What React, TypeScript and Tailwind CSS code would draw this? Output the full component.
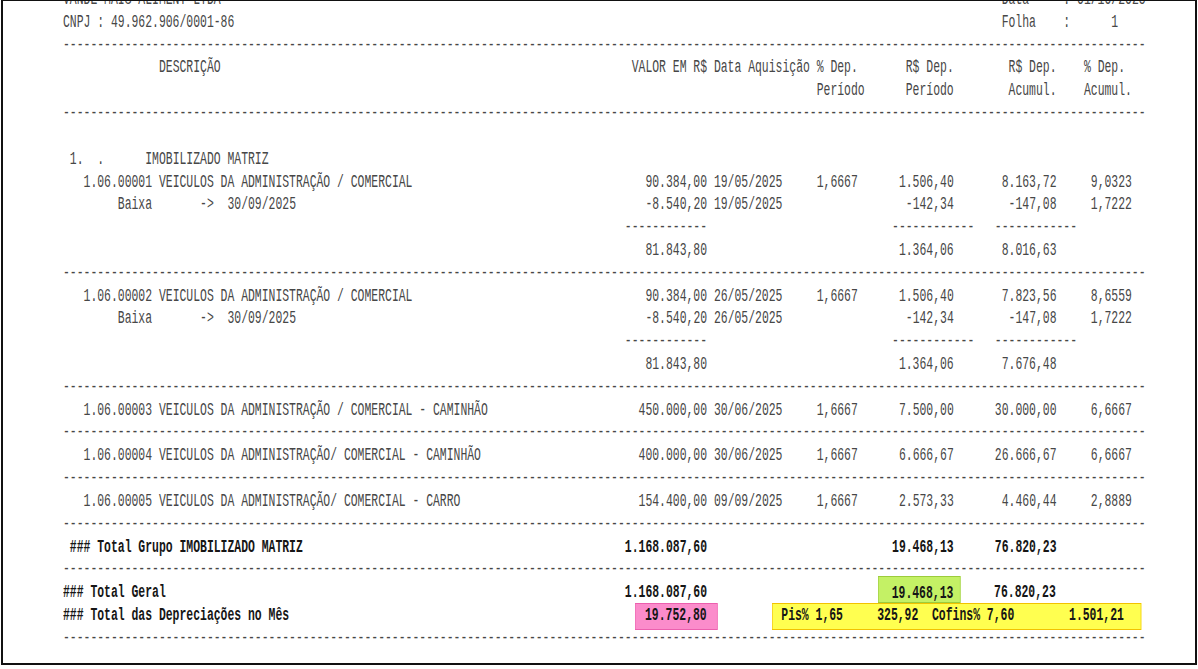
import React from 'react'

type Seg = { c: number; t: string; k?: string };

const B = "font-bold text-[#161616]";
const GREEN = "font-bold text-[#161616] bg-[#c4f165] border-y border-x-[1.6px] border-[#9ccc3c] pt-[5.5px] pb-0 pl-[20px] -ml-[21.6px] pr-[10px] -mr-[11.6px]";
const PINK = "font-bold text-[#161616] bg-[#fb8ccb] border-y border-x-[1.6px] border-[#ec5fae] pt-[0.5px] pb-[4.5px] pl-[14.6px] -ml-[16.2px] pr-[16.4px] -mr-[18px]";
const YELLOW = "font-bold text-[#161616] bg-[#ffff50] border-y border-x-[1.6px] border-[#f2c200] pt-[0.5px] pb-[4.5px] pl-[13.4px] -ml-[15px] pr-[26.8px] -mr-[28.4px]";

// right aligned value ending at column `end`
const r = (end: number, t: string, k?: string): Seg => ({ c: end - t.length + 1, t, k });

const DASH: Seg[] = [{ c: 0, t: "-".repeat(158) }];
const SUB: Seg[] = [
    { c: 82, t: "-".repeat(12) },
    { c: 121, t: "-".repeat(12) },
    { c: 136, t: "-".repeat(12) },
];

const item = (code: string, desc: string, valor: string, data: string, rsPer: string, rsAcu: string, pcAcu: string): Seg[] => [
    { c: 3, t: `${code} ${desc}` },
    r(93, valor),
    { c: 95, t: data },
    r(115, "1,6667"),
    r(129, rsPer),
    r(144, rsAcu),
    r(155, pcAcu),
];

const baixa = (data: string): Seg[] => [
    { c: 8, t: "Baixa" },
    { c: 20, t: "->" },
    { c: 24, t: "30/09/2025" },
    r(93, "-8.540,20"),
    { c: 95, t: data },
    r(129, "-142,34"),
    r(144, "-147,08"),
    r(155, "1,7222"),
];

const lines: Seg[][] = [
    [{ c: 0, t: "VANDE MAIS ALIMENT LTDA" }, { c: 137, t: "Data" }, { c: 146, t: ":" }, { c: 148, t: "01/10/2025" }],
    [{ c: 0, t: "CNPJ : 49.962.906/0001-86" }, { c: 137, t: "Folha" }, { c: 146, t: ":" }, { c: 153, t: "1" }],
    DASH,
    [{ c: 14, t: "DESCRIÇÃO" }, { c: 83, t: "VALOR EM R$ Data Aquisição % Dep." }, { c: 123, t: "R$ Dep." }, { c: 138, t: "R$ Dep." }, { c: 149, t: "% Dep." }],
    [{ c: 110, t: "Período" }, { c: 123, t: "Período" }, { c: 138, t: "Acumul." }, { c: 149, t: "Acumul." }],
    DASH,
    [],
    [{ c: 1, t: "1." }, { c: 5, t: "." }, { c: 12, t: "IMOBILIZADO MATRIZ" }],
    item("1.06.00001", "VEICULOS DA ADMINISTRAÇÃO / COMERCIAL", "90.384,00", "19/05/2025", "1.506,40", "8.163,72", "9,0323"),
    baixa("19/05/2025"),
    SUB,
    [r(93, "81.843,80"), r(129, "1.364,06"), r(144, "8.016,63")],
    DASH,
    item("1.06.00002", "VEICULOS DA ADMINISTRAÇÃO / COMERCIAL", "90.384,00", "26/05/2025", "1.506,40", "7.823,56", "8,6559"),
    baixa("26/05/2025"),
    SUB,
    [r(93, "81.843,80"), r(129, "1.364,06"), r(144, "7.676,48")],
    DASH,
    item("1.06.00003", "VEICULOS DA ADMINISTRAÇÃO / COMERCIAL - CAMINHÃO", "450.000,00", "30/06/2025", "7.500,00", "30.000,00", "6,6667"),
    DASH,
    item("1.06.00004", "VEICULOS DA ADMINISTRAÇÃO/ COMERCIAL - CAMINHÃO", "400.000,00", "30/06/2025", "6.666,67", "26.666,67", "6,6667"),
    DASH,
    item("1.06.00005", "VEICULOS DA ADMINISTRAÇÃO/ COMERCIAL - CARRO", "154.400,00", "09/09/2025", "2.573,33", "4.460,44", "2,8889"),
    DASH,
    [{ c: 1, t: "### Total Grupo IMOBILIZADO MATRIZ", k: B }, r(93, "1.168.087,60", B), r(129, "19.468,13", B), r(144, "76.820,23", B)],
    DASH,
    [{ c: 0, t: "### Total Geral", k: B }, r(93, "1.168.087,60", B), r(129, "19.468,13", GREEN), r(144, "76.820,23", B)],
    [
        { c: 0, t: "### Total das Depreciações no Mês", k: B },
        r(93, "19.752,80", PINK),
        { c: 105, t: "Pis% 1,65     325,92  Cofins% 7,60        1.501,21", k: YELLOW },
    ],
    DASH,
];

const Line = ({ segs }: { segs: Seg[] }) => {
    let pos = 0;
    const out: React.ReactNode[] = [];
    segs.forEach((s, i) => {
        if (s.c > pos) out.push(" ".repeat(s.c - pos));
        out.push(<span key={i} className={s.k}>{s.t}</span>);
        pos = s.c + s.t.length;
    });
    return <div className="h-[22.82px] whitespace-pre">{out}</div>;
}

const App = () => {
    return (
        <main className="w-[1198px] h-[669px] bg-white overflow-hidden">
            <div className="ml-[1px] w-[1196px] h-[665px] border-l-2 border-r-2 border-b-2 border-t border-[#111] overflow-hidden">
                <div className="-mt-[13px] pl-[60px]">
                    <div className="w-[1720px] origin-left scale-x-[0.6343] font-['Liberation_Mono',monospace] text-[18px] leading-[22.82px] text-[#474747]">
                        {lines.map((segs, i) => (
                            <Line key={i} segs={segs} />
                        ))}
                    </div>
                </div>
            </div>
        </main>
    );
}

export default App
